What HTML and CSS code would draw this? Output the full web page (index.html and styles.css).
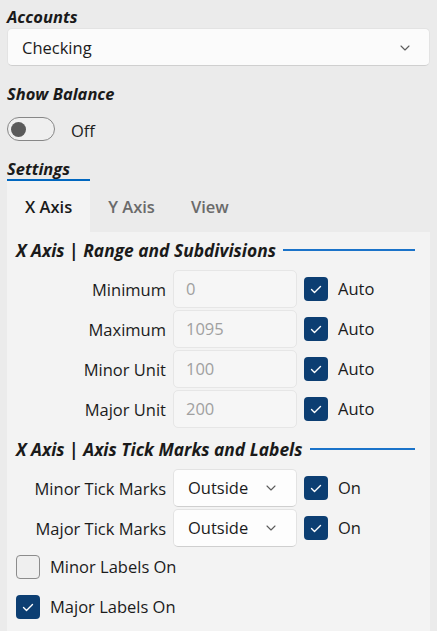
FILE: index.html
```html
<!DOCTYPE html>
<html lang="en">
<head>
<meta charset="utf-8">
<title>Settings</title>
<link rel="stylesheet" href="styles.css">
</head>
<body>
<div class="page">
  <div class="field-label">Accounts</div>
  <div class="combo combo-main">
    <span class="combo-text">Checking</span>
    <svg class="chevron" width="10" height="6" viewBox="0 0 10 6"><path d="M1 1 L5 5 L9 1" fill="none" stroke="#5c5c5c" stroke-width="1.1" stroke-linecap="round" stroke-linejoin="round"/></svg>
  </div>

  <div class="field-label label-gap">Show Balance</div>
  <div class="toggle-row">
    <span class="toggle"><span class="knob"></span></span>
    <span class="toggle-text">Off</span>
  </div>

  <div class="tabview-title">Settings</div>
  <div class="tabs">
    <div class="tab active">X Axis</div>
    <div class="tab">Y Axis</div>
    <div class="tab">View</div>
  </div>

  <div class="panel">
    <div class="section-head"><span>X Axis | Range and Subdivisions</span><span class="rule"></span></div>
    <div class="form-grid">
      <div class="row-label">Minimum</div>
      <div class="textbox">0</div>
      <span class="check on"><svg width="24" height="24" viewBox="0 0 24 24"><path d="M7.5 12.5 L10.5 15.5 L16.5 9.5" fill="none" stroke="#fff" stroke-width="1.4" stroke-linecap="round" stroke-linejoin="round"/></svg></span>
      <div class="check-text">Auto</div>

      <div class="row-label">Maximum</div>
      <div class="textbox">1095</div>
      <span class="check on"><svg width="24" height="24" viewBox="0 0 24 24"><path d="M7.5 12.5 L10.5 15.5 L16.5 9.5" fill="none" stroke="#fff" stroke-width="1.4" stroke-linecap="round" stroke-linejoin="round"/></svg></span>
      <div class="check-text">Auto</div>

      <div class="row-label">Minor Unit</div>
      <div class="textbox">100</div>
      <span class="check on"><svg width="24" height="24" viewBox="0 0 24 24"><path d="M7.5 12.5 L10.5 15.5 L16.5 9.5" fill="none" stroke="#fff" stroke-width="1.4" stroke-linecap="round" stroke-linejoin="round"/></svg></span>
      <div class="check-text">Auto</div>

      <div class="row-label">Major Unit</div>
      <div class="textbox">200</div>
      <span class="check on"><svg width="24" height="24" viewBox="0 0 24 24"><path d="M7.5 12.5 L10.5 15.5 L16.5 9.5" fill="none" stroke="#fff" stroke-width="1.4" stroke-linecap="round" stroke-linejoin="round"/></svg></span>
      <div class="check-text">Auto</div>
    </div>

    <div class="section-head second"><span>X Axis | Axis Tick Marks and Labels</span><span class="rule"></span></div>
    <div class="form-grid">
      <div class="row-label">Minor Tick Marks</div>
      <div class="combo combo-small">
        <span class="combo-text">Outside</span>
        <svg class="chevron" width="10" height="6" viewBox="0 0 10 6"><path d="M1 1 L5 5 L9 1" fill="none" stroke="#5c5c5c" stroke-width="1.1" stroke-linecap="round" stroke-linejoin="round"/></svg>
      </div>
      <span class="check on"><svg width="24" height="24" viewBox="0 0 24 24"><path d="M7.5 12.5 L10.5 15.5 L16.5 9.5" fill="none" stroke="#fff" stroke-width="1.4" stroke-linecap="round" stroke-linejoin="round"/></svg></span>
      <div class="check-text">On</div>

      <div class="row-label">Major Tick Marks</div>
      <div class="combo combo-small">
        <span class="combo-text">Outside</span>
        <svg class="chevron" width="10" height="6" viewBox="0 0 10 6"><path d="M1 1 L5 5 L9 1" fill="none" stroke="#5c5c5c" stroke-width="1.1" stroke-linecap="round" stroke-linejoin="round"/></svg>
      </div>
      <span class="check on"><svg width="24" height="24" viewBox="0 0 24 24"><path d="M7.5 12.5 L10.5 15.5 L16.5 9.5" fill="none" stroke="#fff" stroke-width="1.4" stroke-linecap="round" stroke-linejoin="round"/></svg></span>
      <div class="check-text">On</div>
    </div>

    <div class="check-list">
      <div class="check-row">
        <span class="check off"></span>
        <span class="check-text">Minor Labels On</span>
      </div>
      <div class="check-row">
        <span class="check on"><svg width="24" height="24" viewBox="0 0 24 24"><path d="M7.5 12.5 L10.5 15.5 L16.5 9.5" fill="none" stroke="#fff" stroke-width="1.4" stroke-linecap="round" stroke-linejoin="round"/></svg></span>
        <span class="check-text">Major Labels On</span>
      </div>
    </div>
  </div>
</div>
</body>
</html>
```

FILE: styles.css
```css
* { box-sizing: border-box; }

html, body {
  margin: 0;
  padding: 0;
  height: 100%;
  overflow: hidden;
}

body {
  background: #ebebeb;
  font-family: "Open Sans", "Noto Sans", sans-serif;
  font-size: 16.5px;
  color: #1b1b1b;
}

.page {
  padding: 5px 7px 0 7px;
}

.field-label {
  height: 23px;
  line-height: 23px;
  font-weight: 700;
  font-style: italic;
  color: #1a1a1a;
}

.label-gap {
  margin-top: 16px;
}

.combo {
  display: flex;
  align-items: center;
  justify-content: space-between;
  background: #fbfbfb;
  border: 1px solid #e3e3e3;
  border-bottom-color: #cfcfcf;
  border-radius: 5px;
  height: 38px;
}

.combo-main {
  padding: 2px 19px 0 14px;
}

.combo-small {
  padding: 0 20px 0 14px;
  background: #fdfdfd;
}

.combo-text {
  line-height: 22px;
}

.chevron {
  display: block;
  flex: none;
}

.toggle-row {
  display: flex;
  align-items: center;
  margin-top: 12px;
  height: 24px;
}

.toggle {
  position: relative;
  width: 48px;
  height: 24px;
  border: 1px solid #878787;
  border-radius: 12px;
  background: #efefef;
  flex: none;
}

.knob {
  position: absolute;
  left: 3px;
  top: 4px;
  width: 15px;
  height: 15px;
  border-radius: 50%;
  background: #5a5a5a;
}

.toggle-text {
  margin-left: 16px;
  padding-top: 2px;
}

.tabview-title {
  margin-top: 17px;
  width: 83px;
  height: 23px;
  line-height: 21px;
  font-weight: 700;
  font-style: italic;
  color: #1a1a1a;
  border-bottom: 2px solid #0067c0;
}

.tabs {
  display: flex;
  height: 51px;
}

.tab {
  padding: 0 18px;
  line-height: 51px;
  font-weight: 600;
  color: #6a6a6a;
  white-space: nowrap;
}

.tab.active {
  background: #f3f3f3;
  color: #1a1a1a;
  min-width: 83px;
}

.panel {
  background: #f3f3f3;
  padding: 7px 15px 0 9px;
  height: 420px;
}

.section-head {
  display: flex;
  align-items: center;
  height: 23px;
  line-height: 23px;
  font-size: 17.4px;
  font-weight: 700;
  font-style: italic;
  color: #1a1a1a;
  white-space: nowrap;
}

.section-head.second {
  margin-top: 10px;
}

.rule {
  flex: 1;
  height: 2px;
  margin-left: 7px;
  margin-top: -1px;
  background: #1a73c9;
}

.form-grid {
  display: grid;
  grid-template-columns: 150px 124px 24px auto;
  grid-auto-rows: 38px;
  column-gap: 7px;
  row-gap: 2px;
  margin-top: 8px;
  align-items: center;
}

.row-label {
  text-align: right;
  line-height: 22px;
  padding-top: 2px;
}

.textbox {
  height: 38px;
  line-height: 36px;
  padding-left: 12px;
  border: 1px solid #e6e6e6;
  border-radius: 5px;
  background: #f6f6f6;
  color: #a0a0a0;
}

.check {
  width: 24px;
  height: 24px;
  border-radius: 4px;
  display: block;
  flex: none;
}

.check svg {
  display: block;
}

.check.on {
  background: #0c3e72;
}

.check.off {
  background: #efefef;
  border: 1px solid #8c8c8c;
}

.check-text {
  margin-left: 3px;
  line-height: 22px;
}

.check-list {
  margin-top: 0;
}

.check-row {
  display: flex;
  align-items: center;
  height: 40px;
}

.check-row .check-text {
  margin-left: 10px;
}
```
